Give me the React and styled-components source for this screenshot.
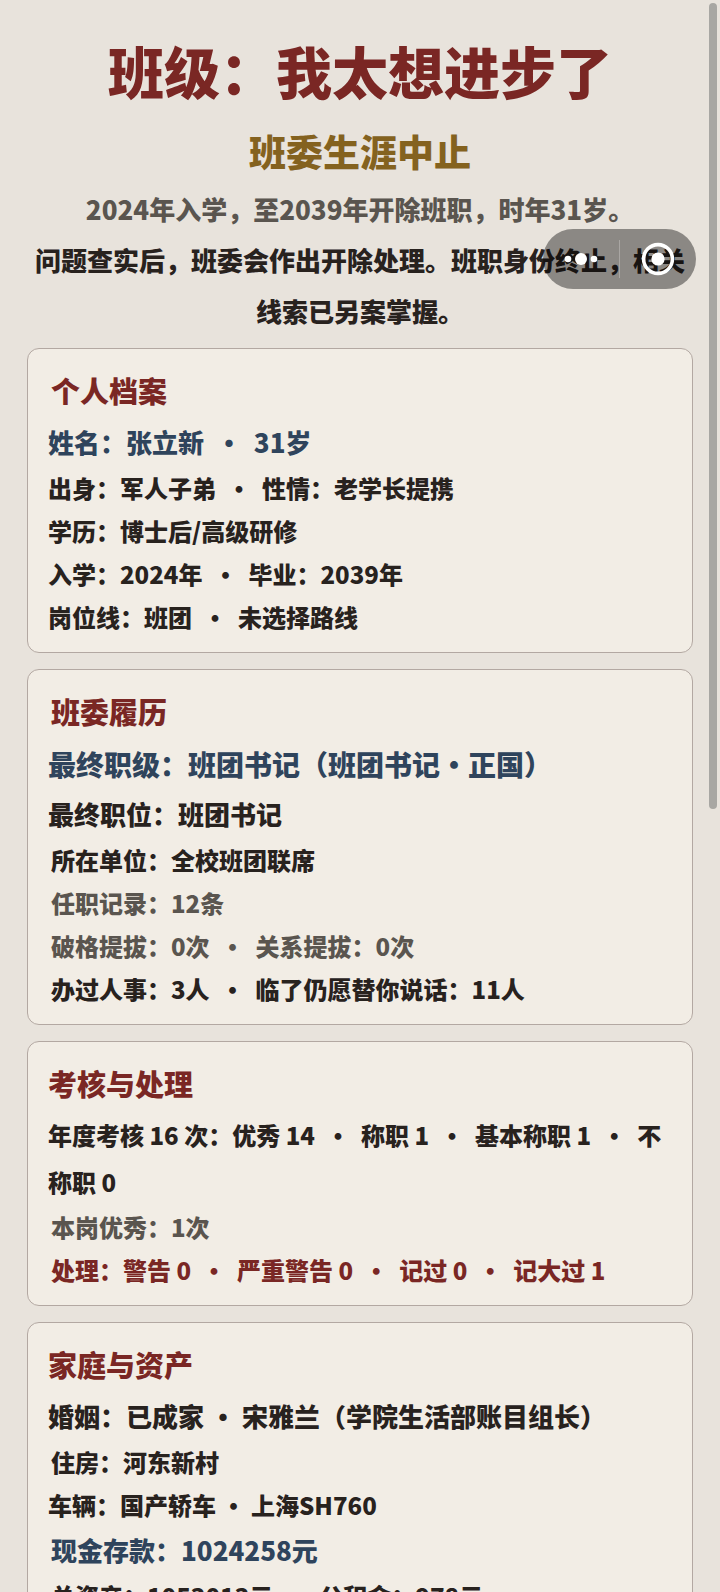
import styled, { createGlobalStyle } from "styled-components";

const App = () => {
  return (
    <>
      <GlobalStyle />
      <Page>
        <Header>
          <Title>班级：我太想进步了</Title>
          <Ending>班委生涯中止</Ending>
          <Summary $color={colors.muted}>
            2024年入学，至2039年开除班职，时年31岁。
          </Summary>
          <Summary>
            问题查实后，班委会作出开除处理。班职身份终止，相关线索已另案掌握。
          </Summary>
        </Header>
        <CardList>
          {sections.map((section) => (
            <Card key={section.title}>
              <CardTitle $inset={section.inset}>{section.title}</CardTitle>
              {section.rows.map((row) => (
                <Row
                  key={row.text}
                  $size={row.size}
                  $color={row.color}
                  $inset={row.inset}
                  $tall={row.tall}
                >
                  {row.text}
                </Row>
              ))}
            </Card>
          ))}
        </CardList>
      </Page>
      <Capsule>
        <CapsuleButton type="button" aria-label="更多">
          <svg width="34" height="34" viewBox="0 0 34 34" fill="white">
            <circle cx="4" cy="17" r="3.3" />
            <circle cx="17" cy="17" r="6" />
            <circle cx="30" cy="17" r="3.3" />
          </svg>
        </CapsuleButton>
        <Divider />
        <CapsuleButton type="button" aria-label="关闭">
          <svg width="34" height="34" viewBox="0 0 34 34" fill="white">
            <circle cx="17" cy="17" r="6.6" />
            <circle
              cx="17"
              cy="17"
              r="14.4"
              fill="none"
              stroke="white"
              strokeWidth="3.6"
            />
          </svg>
        </CapsuleButton>
      </Capsule>
      <ScrollThumb />
    </>
  );
};

export default App;

const colors = {
  page: "#e8e3dc",
  card: "#f2ede5",
  border: "#b3a8a2",
  red: "#7a2724",
  gold: "#84621f",
  blue: "#2f445c",
  ink: "#28221e",
  muted: "#5a554f",
};

const rowHeights = { 24: 43, 26: 48, 28: 51 };

const sections = [
  {
    title: "个人档案",
    inset: true,
    rows: [
      { text: "姓名：张立新  ·  31岁", size: 26, color: colors.blue },
      { text: "出身：军人子弟  ·  性情：老学长提携" },
      { text: "学历：博士后/高级研修" },
      { text: "入学：2024年  ·  毕业：2039年" },
      { text: "岗位线：班团  ·  未选择路线" },
    ],
  },
  {
    title: "班委履历",
    inset: true,
    rows: [
      {
        text: "最终职级：班团书记（班团书记·正国）",
        size: 28,
        color: colors.blue,
      },
      { text: "最终职位：班团书记", size: 26 },
      { text: "所在单位：全校班团联席", inset: true },
      { text: "任职记录：12条", color: colors.muted, inset: true },
      {
        text: "破格提拔：0次  ·  关系提拔：0次",
        color: colors.muted,
        inset: true,
      },
      { text: "办过人事：3人  ·  临了仍愿替你说话：11人", inset: true },
    ],
  },
  {
    title: "考核与处理",
    rows: [
      {
        text: "年度考核 16 次：优秀 14  ·  称职 1  ·  基本称职 1  ·  不称职 0",
        tall: true,
      },
      { text: "本岗优秀：1次", color: colors.muted, inset: true },
      {
        text: "处理：警告 0  ·  严重警告 0  ·  记过 0  ·  记大过 1",
        color: colors.red,
        inset: true,
      },
    ],
  },
  {
    title: "家庭与资产",
    rows: [
      { text: "婚姻：已成家 · 宋雅兰（学院生活部账目组长）", size: 26 },
      { text: "住房：河东新村", inset: true },
      { text: "车辆：国产轿车 · 上海SH760" },
      {
        text: "现金存款：1024258元",
        size: 26,
        color: colors.blue,
        inset: true,
      },
      { text: "总资产：1053013元  ·  公积金：978元", inset: true },
    ],
  },
];

const GlobalStyle = createGlobalStyle`
  html {
    scrollbar-width: none;
  }
  body {
    margin: 0;
    background: ${colors.page};
    color: ${colors.ink};
    font-family: "Noto Sans CJK SC", sans-serif;
    font-weight: 900;
  }
`;

const Page = styled.main`
  padding: 26px 27px 16px;
`;

const Header = styled.header`
  text-align: center;
  padding-bottom: 12px;
`;

const Title = styled.h1`
  margin: 0;
  font-size: 56px;
  font-weight: inherit;
  line-height: 88px;
  color: ${colors.red};
`;

const Ending = styled.h2`
  margin: 10px 0 5px;
  font-size: 37px;
  font-weight: inherit;
  line-height: 54px;
  color: ${colors.gold};
`;

const Summary = styled.p`
  margin: 0;
  font-size: 26px;
  line-height: 51px;
  color: ${(props) => props.$color || colors.ink};
`;

const CardList = styled.div`
  display: flex;
  flex-direction: column;
  gap: 16px;
`;

const Card = styled.section`
  padding: 14px 20px;
  background: ${colors.card};
  border: 1px solid ${colors.border};
  border-radius: 12px;
`;

const CardTitle = styled.h3`
  margin: 0;
  padding-left: ${(props) => (props.$inset ? "3px" : "0")};
  font-size: 29px;
  font-weight: inherit;
  line-height: 55px;
  color: ${colors.red};
`;

const Row = styled.p`
  margin: 0;
  padding-left: ${(props) => (props.$inset ? "3px" : "0")};
  font-size: ${(props) => props.$size || 24}px;
  line-height: ${(props) =>
    props.$tall ? 47 : rowHeights[props.$size || 24]}px;
  color: ${(props) => props.$color || colors.ink};
  white-space: pre-wrap;
`;

const Capsule = styled.div`
  position: fixed;
  top: 229px;
  right: 24px;
  display: flex;
  align-items: center;
  width: 153px;
  height: 60px;
  border-radius: 30px;
  background: rgba(0, 0, 0, 0.4);
`;

const CapsuleButton = styled.button`
  flex: 1;
  display: flex;
  align-items: center;
  justify-content: center;
  height: 100%;
  padding: 0;
  border: none;
  background: none;
  cursor: pointer;
`;

const Divider = styled.span`
  width: 1px;
  height: 38px;
  background: rgba(255, 255, 255, 0.25);
`;

const ScrollThumb = styled.div`
  position: fixed;
  top: 3px;
  right: 3px;
  width: 8px;
  height: 806px;
  border-radius: 4px;
  background: #a8a7a3;
`;
